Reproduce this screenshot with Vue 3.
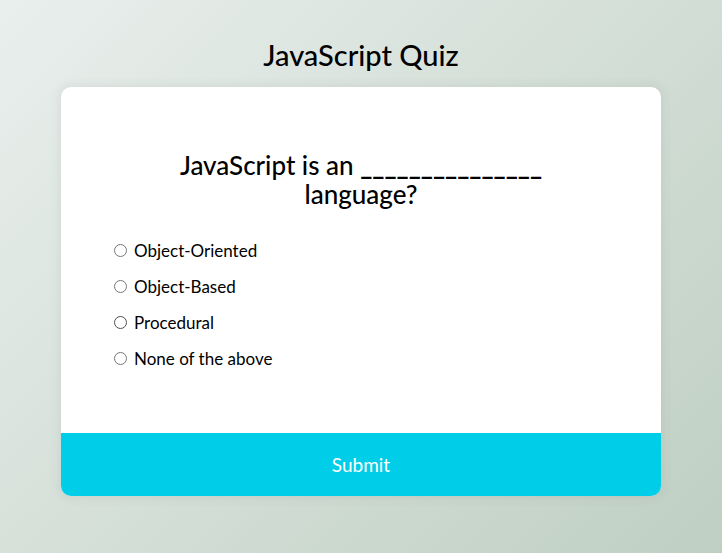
<script setup>
import { ref } from 'vue'

const answer = ref('')
const highlighted = ref('c')
const options = [
  { id: 'a', text: 'Object-Oriented' },
  { id: 'b', text: 'Object-Based' },
  { id: 'c', text: 'Procedural' },
  { id: 'd', text: 'None of the above' },
]
</script>

<template>
  <main class="page">
    <h1 class="title">JavaScript Quiz</h1>
    <form class="quiz" @submit.prevent>
      <div class="body">
        <h2 id="question" class="question">JavaScript is an <span class="blank">_______________</span> language?</h2>
        <ul class="options" role="radiogroup" aria-labelledby="question">
          <li
            v-for="o in options"
            :key="o.id"
            class="option"
            :class="{ highlighted: o.id === highlighted }"
            @mouseenter="highlighted = o.id"
          >
            <input :id="o.id" v-model="answer" class="radio" type="radio" name="answer" :value="o.id">
            <label :for="o.id">{{ o.text }}</label>
          </li>
        </ul>
      </div>
      <button class="submit" type="submit">Submit</button>
    </form>
  </main>
</template>

<style>
body {
  margin: 0;
}
</style>

<style scoped>
.page {
  box-sizing: border-box;
  min-height: 100vh;
  display: flex;
  flex-direction: column;
  align-items: center;
  justify-content: center;
  padding: 16px 16px 34px;
  background: linear-gradient(135deg, #e9efed 0%, #bfcfc2 100%);
  color: #000;
  font-family: Lato, "Open Sans", sans-serif;
}
.title {
  margin: 0 0 16px;
  font-size: 29px;
  line-height: 32px;
  font-weight: 500;
  text-align: center;
}
.quiz {
  width: 100%;
  max-width: 600px;
  overflow: hidden;
  border-radius: 10px;
  background: #fff;
  box-shadow: 0 0 10px 2px rgba(100, 100, 100, 0.1);
}
.body {
  padding: 64px 53px 56px;
}
.question {
  margin: 0 0 24px;
  padding: 0 16px;
  font-size: 26px;
  line-height: 29px;
  font-weight: 500;
  text-align: center;
}
.blank {
  font-weight: 700;
}
.options {
  margin: 0;
  padding: 0;
  list-style: none;
}
.option {
  display: flex;
  align-items: center;
  gap: 7px;
  font-size: 17px;
  line-height: 36px;
}
.radio {
  box-sizing: border-box;
  appearance: none;
  width: 13px;
  height: 13px;
  margin: 0 0 2px;
  border: 1px solid #767676;
  border-radius: 50%;
  background: #fff;
}
.highlighted .radio {
  border-color: #4f4f4f;
}
.radio:checked {
  border-color: #00cee9;
  background: #00cee9;
  box-shadow: inset 0 0 0 2px #fff;
}
.submit {
  display: block;
  width: 100%;
  border: 0;
  padding: 20px;
  background: #00cee9;
  color: #fff;
  font-family: inherit;
  font-size: 19px;
  line-height: 23px;
  cursor: pointer;
}
</style>
